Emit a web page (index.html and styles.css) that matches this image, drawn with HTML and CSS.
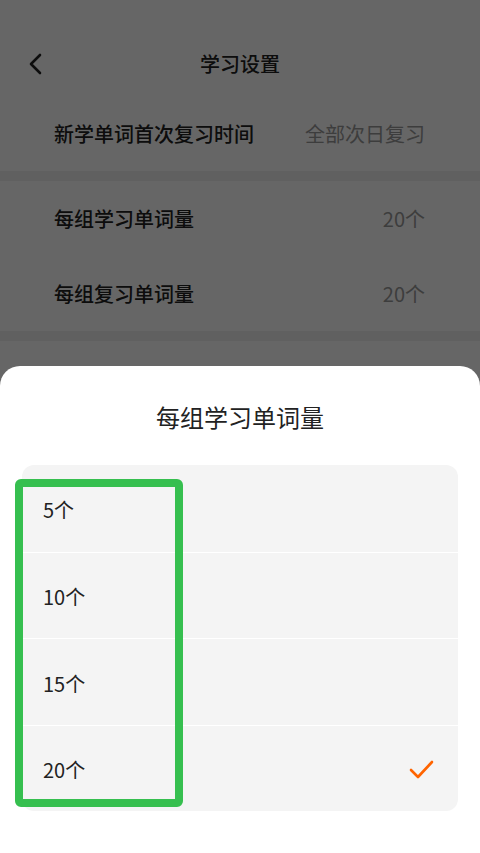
FILE: index.html
```html
<!DOCTYPE html>
<html lang="zh">
<head>
<meta charset="utf-8">
<title>学习设置</title>
<link rel="stylesheet" href="styles.css">
</head>
<body>
<div class="page">
  <header class="nav">
    <span class="back">
      <svg width="16" height="24" viewBox="0 0 16 24"><path d="M12 3 L3 12 L12 21" fill="none" stroke="#222" stroke-width="2.6" stroke-linecap="round" stroke-linejoin="round"/></svg>
    </span>
    <span class="nav-title">学习设置</span>
  </header>
  <div class="row"><span class="label">新学单词首次复习时间</span><span class="value">全部次日复习</span></div>
  <div class="band"></div>
  <div class="row"><span class="label">每组学习单词量</span><span class="value">20个</span></div>
  <div class="row"><span class="label">每组复习单词量</span><span class="value">20个</span></div>
  <div class="band"></div>
</div>
<div class="mask"></div>
<div class="sheet">
  <div class="sheet-title">每组学习单词量</div>
  <div class="options">
    <div class="option"><span>5个</span></div>
    <div class="option"><span>10个</span></div>
    <div class="option"><span>15个</span></div>
    <div class="option"><span>20个</span>
      <svg class="check" width="26" height="22" viewBox="0 0 26 22"><path d="M2 11 L9 18 L23 3" fill="none" stroke="#ff6400" stroke-width="2.6" stroke-linecap="round" stroke-linejoin="round"/></svg>
    </div>
  </div>
  <div class="highlight"></div>
</div>
</body>
</html>
```
FILE: styles.css
```css
* { box-sizing: border-box; }
html, body {
  margin: 0;
  padding: 0;
  width: 480px;
  height: 853px;
  overflow: hidden;
  background: #fff;
  font-family: "Noto Sans CJK SC", "Noto Sans", sans-serif;
}
.page {
  width: 480px;
  height: 853px;
  background: #fff;
}
.nav {
  height: 96px;
  padding-top: 32px;
  display: flex;
  align-items: center;
  justify-content: center;
  position: relative;
}
.back {
  position: absolute;
  left: 28px;
  top: 52px;
  width: 16px;
  height: 24px;
  display: flex;
}
.nav-title {
  font-size: 20px;
  line-height: 28px;
  color: #222;
  font-weight: 500;
}
.row {
  height: 75px;
  display: flex;
  align-items: center;
  justify-content: space-between;
  padding: 0 55px 0 54px;
}
.label {
  font-size: 20px;
  color: #222;
  font-weight: 500;
}
.value {
  font-size: 20px;
  color: #999;
}
.band {
  height: 10px;
  background: #f0f0f0;
}
.mask {
  position: fixed;
  inset: 0;
  background: rgba(0, 0, 0, 0.6);
}
.sheet {
  position: fixed;
  left: 0;
  right: 0;
  bottom: 0;
  height: 487px;
  background: #fff;
  border-radius: 20px 20px 0 0;
  padding: 0 22px;
}
.sheet-title {
  height: 99px;
  padding-top: 34px;
  text-align: center;
  font-size: 24px;
  line-height: 34px;
  color: #222;
}
.options {
  background: #f4f4f4;
  border-radius: 12px;
  overflow: hidden;
}
.option {
  height: 86.5px;
  display: flex;
  align-items: center;
  justify-content: space-between;
  padding: 3px 23px 0 21px;
  border-top: 1px solid #fff;
  font-size: 20px;
  color: #222;
}
.option:first-child {
  border-top: none;
}
.check {
  display: block;
}
.highlight {
  position: absolute;
  left: 15px;
  top: 113px;
  width: 168px;
  height: 328px;
  border: 8px solid #36bf4f;
  border-radius: 6px;
}
```
